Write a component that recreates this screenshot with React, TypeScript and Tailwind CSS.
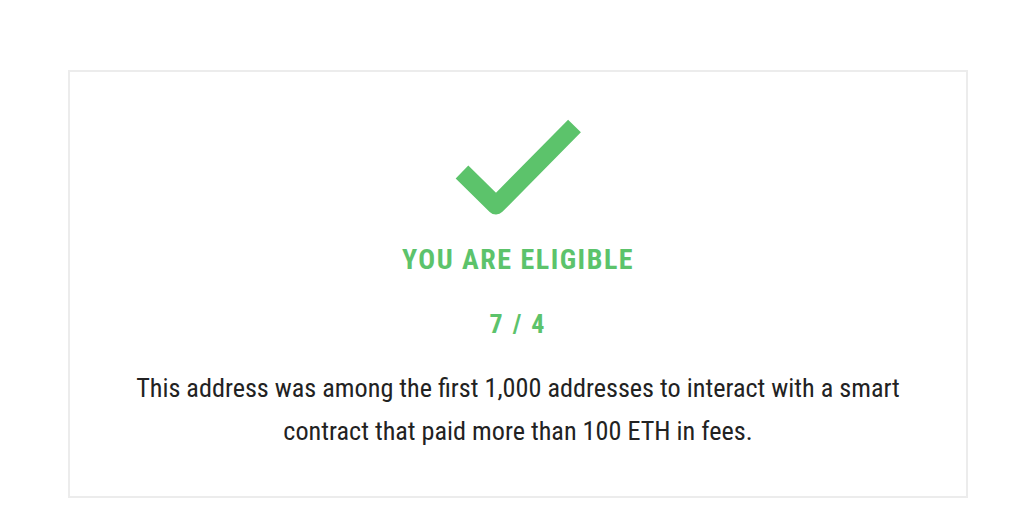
export default function App() {
  return (
    <div className="min-h-screen bg-white pt-[70px] px-[68px] pb-[17px]" style={{ fontFamily: '"Roboto Condensed", Roboto, "Liberation Sans", sans-serif' }}>
      <div className="border-2 border-[#ececec] h-[428px] flex flex-col items-center pt-[44px]">
        {/* Check icon */}
        <svg width="135" height="105" viewBox="450 115 135 105" className="block">
          <polyline
            points="461,171 495,204.5 573.5,125"
            fill="none"
            stroke="#5cc36b"
            strokeWidth="18"
            strokeLinecap="butt"
            strokeLinejoin="round"
          />
        </svg>
        <h1 className="mt-[23px] text-[28px] leading-[32px] font-bold tracking-[1.5px] text-[#5cc36b]">YOU ARE ELIGIBLE</h1>
        <div className="mt-[34px] text-[26px] leading-[28px] font-bold tracking-[2px] text-[#5cc36b]">7 / 4</div>
        <p className="mt-[29px] max-w-[800px] text-center text-[26.2px] leading-[43px] text-[#222]">
          This address was among the first 1,000 addresses to interact with a smart contract that paid more than 100 ETH in fees.
        </p>
      </div>
    </div>
  );
}
